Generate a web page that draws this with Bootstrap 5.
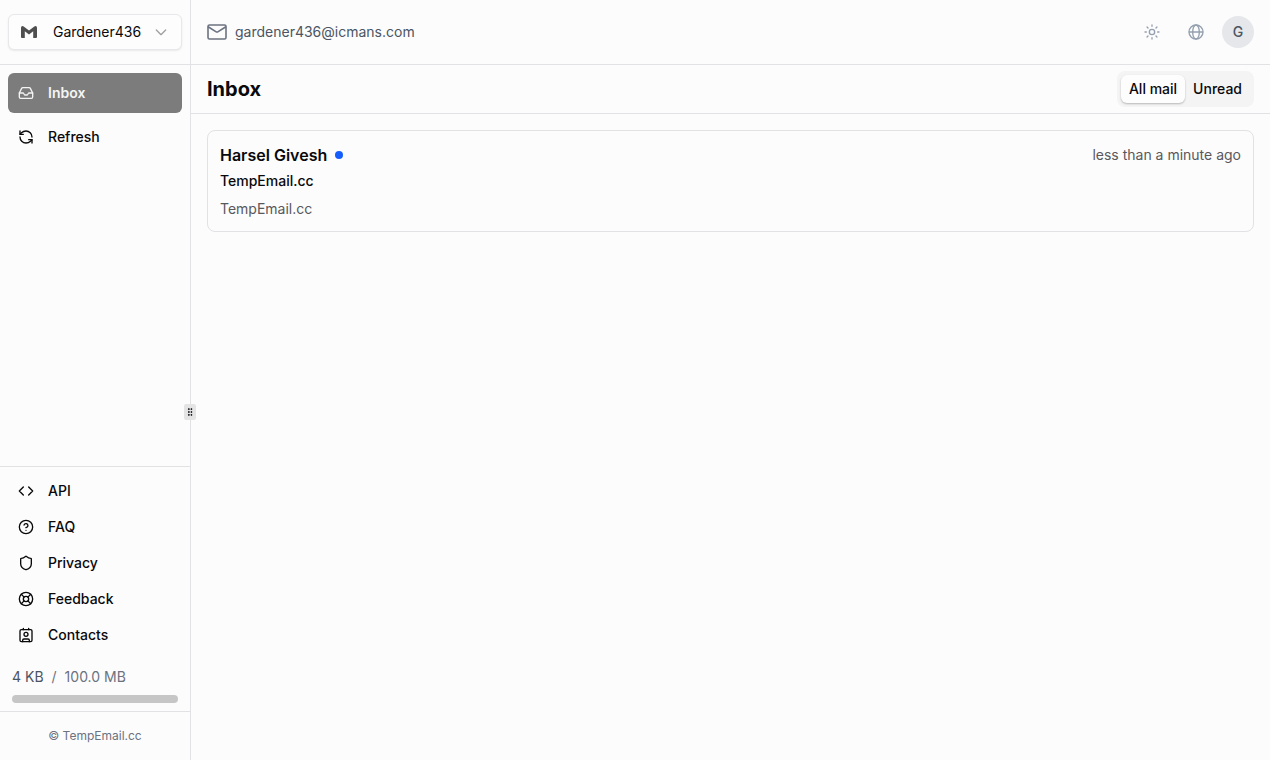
<!DOCTYPE html>
<html lang="en">
<head>
<meta charset="utf-8">
<meta name="viewport" content="width=device-width, initial-scale=1">
<title>Inbox</title>
<link href="https://cdn.jsdelivr.net/npm/bootstrap@5.3.0/dist/css/bootstrap.min.css" rel="stylesheet">
<style>
  :root { --line: #e2e2e4; }
  body { font-family: "Inter", "Liberation Sans", sans-serif; font-size: 14px; line-height: 20px; font-weight: 400; color: #09090b; background: #fcfcfc; }
  .border-top, .border-bottom, .border-end { border-color: var(--line) !important; }
  svg { flex: none; fill: none; stroke: currentColor; stroke-width: 2; stroke-linecap: round; stroke-linejoin: round; }
  .sidebar { width: 15%; min-width: 191px; }
  .topbar { height: 65px; }
  .titlebar { height: 49px; }
  .account { height: 36px; border: 1px solid #e8e8ea; border-radius: 6px; background: #fdfdfd; box-shadow: 0 1px 2px rgba(0,0,0,.08); padding: 0 12px; font-size: 14px; color: #09090b; }
  .side-link { height: 36px; padding: 0 10px; gap: 14px; border-radius: 6px; font-weight: 500; color: #09090b; text-decoration: none; background: none; border: 0; width: 100%; display: flex; align-items: center; }
  .side-link.tall { height: 40px; }
  .side-link.active { background: #7c7c7c; color: #f4f4f4; font-weight: 600; }
  .footer-links { padding: 6px 8px; }
  .slate { color: #6b7280; }
  .slate-dark { color: #4b5563; }
  .quota { height: 8px; border-radius: 4px; background: #c6c6c6; }
  .handle { width: 12px; height: 16px; border-radius: 2px; background: #e4e4e5; color: #09090b; z-index: 2; }
  .icon-btn { width: 36px; height: 36px; color: #94a0af; background: none; border: 0; padding: 0; }
  .avatar { width: 32px; height: 32px; background: #e5e7eb; color: #4b5563; border: 0; padding: 0; font-weight: 500; }
  h1 { font-size: 20px; line-height: 28px; font-weight: 700; }
  .filter { height: 36px; padding: 4px; border-radius: 8px; background: #f4f4f5; }
  .filter button { border: 0; border-radius: 6px; background: none; padding: 0 8px; font-weight: 500; color: #09090b; }
  .filter .active { background: #fdfdfd; box-shadow: 0 1px 2px rgba(0,0,0,.25); }
  .mail { border: 1px solid var(--line); border-radius: 8px; padding: 12px; color: inherit; text-decoration: none; }
  .sender { font-size: 16px; line-height: 24px; font-weight: 600; }
  .unread-dot { width: 8px; height: 8px; background: #155dfc; }
  .muted { color: #58585d; }
  .copy { font-size: 12px; line-height: 16px; }
</style>
</head>
<body>
<div class="d-flex vh-100">
  <aside class="sidebar d-flex flex-column flex-shrink-0 border-end position-relative">
    <div class="topbar border-bottom d-flex align-items-center px-2">
      <button class="account w-100 d-flex align-items-center" type="button">
        <svg width="16" height="16" viewBox="0 0 16 16" style="stroke:none;fill:#4f4f4f"><path d="M0 3.7Q0 2 1.5 2Q2.200 2 3 2.700L8 6.600L13 2.700Q13.800 2 14.500 2Q16 2 16 3.700V13Q16 14 15 14H12.200V7.300L8 10.500L3.800 7.300V14H1Q0 14 0 13Z"/></svg>
        <span class="ms-3">Gardener436</span>
        <svg class="ms-auto" width="16" height="16" viewBox="0 0 24 24" style="color:#a0a0a3"><path d="m5 9 7 7 7-7"/></svg>
      </button>
    </div>
    <nav class="p-2 d-flex flex-column gap-1">
      <a class="side-link tall active" href="#" aria-current="page">
        <svg width="16" height="16" viewBox="0 0 24 24"><path d="M22 12h-6l-2 3h-4l-2-3H2"/><path d="M5.450 5.110 2 12v6a2 2 0 0 0 2 2h16a2 2 0 0 0 2-2v-6l-3.450-6.890A2 2 0 0 0 16.760 4H7.240a2 2 0 0 0-1.790 1.110z"/></svg>
        Inbox</a>
      <button class="side-link tall" type="button">
        <svg width="16" height="16" viewBox="0 0 24 24"><path d="M21 12a9 9 0 0 0-9-9 9.750 9.750 0 0 0-6.740 2.740L3 8"/><path d="M3 3v5h5"/><path d="M3 12a9 9 0 0 0 9 9 9.750 9.750 0 0 0 6.740-2.740L21 16"/><path d="M16 16h5v5"/></svg>
        Refresh</button>
    </nav>
    <div class="mt-auto border-top">
      <nav class="footer-links">
        <a class="side-link" href="#"><svg width="16" height="16" viewBox="0 0 24 24"><path d="m16 18 6-6-6-6M8 6l-6 6 6 6"/></svg>API</a>
        <a class="side-link" href="#"><svg width="16" height="16" viewBox="0 0 24 24"><circle cx="12" cy="12" r="10"/><path d="M9.090 9a3 3 0 0 1 5.830 1c0 2-3 3-3 3M12 17h.01"/></svg>FAQ</a>
        <a class="side-link" href="#"><svg width="16" height="16" viewBox="0 0 24 24"><path d="M20 13c0 5-3.500 7.500-7.660 8.950a1 1 0 0 1-.67-.010C7.500 20.500 4 18 4 13V6a1 1 0 0 1 1-1c2 0 4.500-1.200 6.240-2.720a1.170 1.170 0 0 1 1.520 0C14.510 3.810 17 5 19 5a1 1 0 0 1 1 1z"/></svg>Privacy</a>
        <a class="side-link" href="#"><svg width="16" height="16" viewBox="0 0 24 24"><circle cx="12" cy="12" r="10"/><circle cx="12" cy="12" r="4"/><path d="m4.930 4.930 4.240 4.240M14.830 9.170l4.240-4.240M14.830 14.830l4.240 4.240M9.170 14.830l-4.240 4.240"/></svg>Feedback</a>
        <a class="side-link" href="#"><svg width="16" height="16" viewBox="0 0 24 24"><path d="M16 2v2M8 2v2M7 22v-2a2 2 0 0 1 2-2h6a2 2 0 0 1 2 2v2"/><circle cx="12" cy="11" r="3"/><rect x="3" y="4" width="18" height="18" rx="2"/></svg>Contacts</a>
      </nav>
      <div class="px-2 mx-1 py-2">
        <div class="d-flex gap-2 mb-2 slate"><span class="slate-dark">4 KB</span><span>/</span><span>100.0 MB</span></div>
        <div class="quota" role="progressbar" aria-label="Storage used" aria-valuemin="0" aria-valuemax="100" aria-valuenow="0"></div>
      </div>
      <div class="border-top copy slate text-center py-3">© TempEmail.cc</div>
    </div>
    <div class="handle position-absolute start-100 d-flex align-items-center justify-content-center translate-middle-x" style="top:calc(50% + 24px)">
      <svg width="10" height="10" viewBox="0 0 24 24"><g fill="currentColor"><circle cx="9" cy="5" r="1"/><circle cx="9" cy="12" r="1"/><circle cx="9" cy="19" r="1"/><circle cx="15" cy="5" r="1"/><circle cx="15" cy="12" r="1"/><circle cx="15" cy="19" r="1"/></g></svg>
    </div>
  </aside>
  <main class="flex-grow-1">
    <header class="topbar border-bottom d-flex align-items-center px-3">
      <svg class="slate" width="20" height="20" viewBox="0 0 20 20" style="stroke-width:1.600"><rect x="1" y="3" width="18" height="14" rx="1.500"/><path d="m1.500 5 7.300 4.600q1.200.8 2.400 0L18.500 5"/></svg>
      <span class="slate-dark ms-2">gardener436@icmans.com</span>
      <div class="ms-auto d-flex align-items-center gap-2">
        <button class="icon-btn" type="button" aria-label="Theme"><svg class="d-block mx-auto" width="16" height="16" viewBox="0 0 24 24"><circle cx="12" cy="12" r="4"/><path d="M12 1.500v2M12 20.500v2M4.600 4.600l1.400 1.400M18 18l1.400 1.400M1.500 12h2M20.500 12h2M6 18l-1.400 1.400M19.400 4.600l-1.400 1.400"/></svg></button>
        <button class="icon-btn" type="button" aria-label="Language"><svg class="d-block mx-auto" width="16" height="16" viewBox="0 0 24 24"><circle cx="12" cy="12" r="10.500"/><ellipse cx="12" cy="12" rx="5" ry="10.500"/><path d="M2 12h20"/></svg></button>
        <button class="avatar rounded-circle" type="button" aria-label="Profile">G</button>
      </div>
    </header>
    <div class="titlebar border-bottom d-flex align-items-center justify-content-between px-3">
      <h1 class="m-0">Inbox</h1>
      <div class="filter d-flex" role="group" aria-label="Filter">
        <button class="active" type="button">All mail</button>
        <button type="button">Unread</button>
      </div>
    </div>
    <div class="p-3">
      <a class="mail d-block" href="#">
        <div class="d-flex align-items-center mb-1">
          <span class="sender">Harsel Givesh</span>
          <span class="unread-dot rounded-circle ms-2"></span>
          <span class="ms-auto muted">less than a minute ago</span>
        </div>
        <div class="fw-medium mb-2">TempEmail.cc</div>
        <div class="muted">TempEmail.cc</div>
      </a>
    </div>
  </main>
</div>
<script src="https://cdn.jsdelivr.net/npm/bootstrap@5.3.0/dist/js/bootstrap.bundle.min.js"></script>
</body>
</html>
